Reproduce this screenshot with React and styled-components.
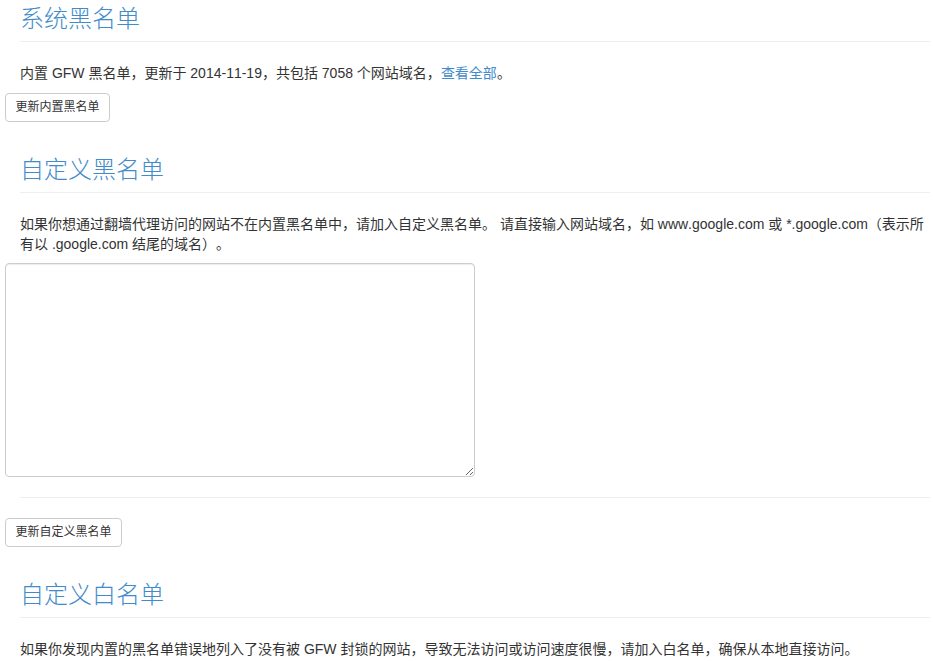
import React from 'react'
import styled, { createGlobalStyle } from 'styled-components'

const GlobalStyle = createGlobalStyle`
  html, body {
    margin: 0;
    padding: 0;
    background: #fff;
  }
  body {
    font-family: "Liberation Sans", Arial, "Noto Sans CJK SC", sans-serif;
    font-size: 14px;
    line-height: 20px;
    color: #333;
    font-kerning: none;
    text-spacing-trim: space-all;
  }
`

const Page = styled.div`
  width: 925px;
  padding: 6px 3px 0 5px;
`

const Section = styled.section`
  display: flex;
  flex-direction: column;
  align-items: flex-start;
  margin-top: ${props => props.first ? '0' : '35px'};
`

const PageHeader = styled.h3`
  align-self: stretch;
  margin: 0 0 20px 15px;
  padding-bottom: 9px;
  border-bottom: 1px solid #eee;
  font-size: 24px;
  line-height: 26px;
  font-weight: 300;
  color: #428bca;
`

const Para = styled.p`
  margin: 1px 0 9px 15px;
  font-size: 14px;
  line-height: 20px;
`

const Link = styled.a`
  color: #428bca;
  text-decoration: none;
`

const Button = styled.button`
  margin-top: 1px;
  font-family: inherit;
  font-size: 12px;
  line-height: 17px;
  padding: 5px 9.5px;
  color: #333;
  background: #fff;
  border: 1px solid #ccc;
  border-radius: 4px;
  cursor: pointer;
`

const TextArea = styled.textarea`
  box-sizing: border-box;
  width: 470px;
  height: 214px;
  margin: 0;
  padding: 6px 12px;
  font-family: inherit;
  font-size: 14px;
  border: 1px solid #ccc;
  border-radius: 4px;
  box-shadow: inset 0 1px 1px rgba(0, 0, 0, 0.075);
  resize: vertical;
`

const Rule = styled.hr`
  align-self: stretch;
  margin: 20px 0 19px 15px;
  border: 0;
  border-top: 1px solid #eee;
`

export default function App() {
  return (
    <Page>
      <GlobalStyle />
      <Section first>
        <PageHeader>系统黑名单</PageHeader>
        <Para>
          内置 GFW 黑名单，更新于 2014-11-19，共包括 7058 个网站域名，<Link href="#">查看全部</Link>。
        </Para>
        <Button>更新内置黑名单</Button>
      </Section>
      <Section>
        <PageHeader>自定义黑名单</PageHeader>
        <Para>
          如果你想通过翻墙代理访问的网站不在内置黑名单中，请加入自定义黑名单。 请直接输入网站域名，如 www.google.com 或 *.google.com（表示所有以 .google.com 结尾的域名）。
        </Para>
        <TextArea />
        <Rule />
        <Button>更新自定义黑名单</Button>
      </Section>
      <Section>
        <PageHeader>自定义白名单</PageHeader>
        <Para>
          如果你发现内置的黑名单错误地列入了没有被 GFW 封锁的网站，导致无法访问或访问速度很慢，请加入白名单，确保从本地直接访问。
        </Para>
      </Section>
    </Page>
  )
}
